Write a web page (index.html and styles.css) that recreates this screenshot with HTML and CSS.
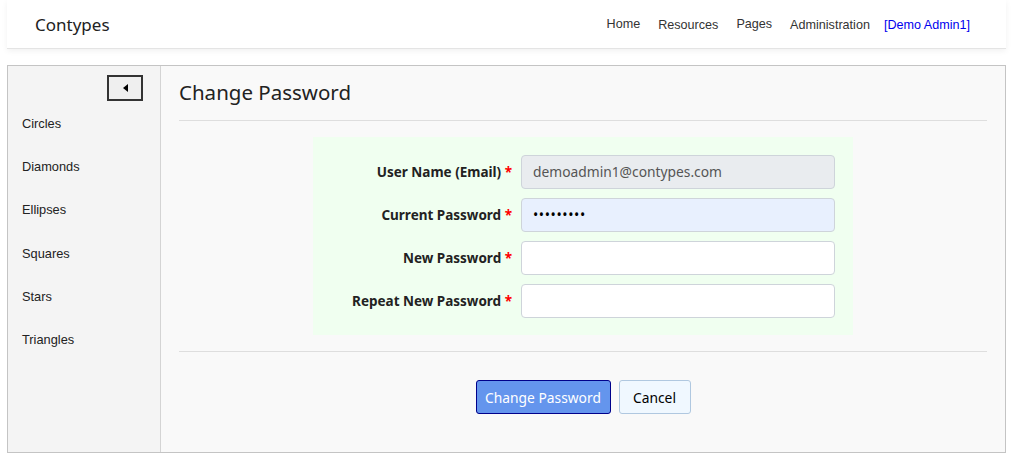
FILE: index.html
```html
<!DOCTYPE html>
<html>
<head>
<meta charset="utf-8">
<link rel="stylesheet" href="styles.css">
</head>
<body>
<header class="topbar">
  <div class="brand">Contypes</div>
  <nav class="nav">
    <a class="nav-link up">Home</a>
    <a class="nav-link">Resources</a>
    <a class="nav-link up">Pages</a>
    <a class="nav-link">Administration</a>
    <a class="nav-link user">[Demo Admin1]</a>
  </nav>
</header>
<main class="panel">
  <aside class="sidebar">
    <div class="toggle-row">
      <button class="toggle"><svg width="5" height="8" viewBox="0 0 5 8"><polygon points="5,0 5,8 0,4" fill="#000"/></svg></button>
    </div>
    <ul class="side-list">
      <li>Circles</li>
      <li>Diamonds</li>
      <li>Ellipses</li>
      <li>Squares</li>
      <li>Stars</li>
      <li>Triangles</li>
    </ul>
  </aside>
  <section class="content">
    <h1 class="title">Change Password</h1>
    <div class="rule"></div>
    <div class="form-wrap">
      <form class="form">
        <label class="lbl">User Name (Email) <span class="req">*</span></label>
        <div class="field disabled">demoadmin1@contypes.com</div>
        <label class="lbl">Current Password <span class="req">*</span></label>
        <div class="field autofill">•••••••••</div>
        <label class="lbl">New Password <span class="req">*</span></label>
        <div class="field"></div>
        <label class="lbl">Repeat New Password <span class="req">*</span></label>
        <div class="field"></div>
      </form>
    </div>
    <div class="rule rule2"></div>
    <div class="actions">
      <button class="btn primary">Change Password</button>
      <button class="btn secondary">Cancel</button>
    </div>
  </section>
</main>
</body>
</html>
```
FILE: styles.css
```css
* { box-sizing: border-box; }
html, body { margin: 0; padding: 0; background: #fff; }
body { font-family: "Noto Sans", sans-serif; color: #212529; }

.topbar {
  margin: 0 9px 0 7px;
  height: 49px;
  background: #fff;
  border-bottom: 1px solid #e4e4e4;
  box-shadow: 0 2px 6px rgba(0,0,0,0.06);
  display: flex;
  align-items: center;
  justify-content: space-between;
  padding: 0 36px 0 28px;
}
.brand { font-size: 17px; color: #222; padding-top: 1px; }
.nav { display: flex; align-items: center; font-family: "Liberation Sans", Arial, sans-serif; font-size: 12.6px; padding-top: 1px; }
.nav-link { color: #333; padding: 0 9px; position: relative; top: 0; }
.nav-link.up { top: -1px; }
.nav-link.user { color: #0000ee; padding-right: 0; padding-left: 5px; }

.panel {
  margin: 16px 9px 0 7px;
  height: 388px;
  border: 1px solid #c4c4c4;
  display: flex;
  background: #f9f9f9;
}
.sidebar {
  width: 153px;
  flex: none;
  background: #f4f4f4;
  border-right: 1px solid #d4d4d4;
}
.toggle-row { display: flex; justify-content: flex-end; padding: 9px 17px 0 0; }
.toggle {
  width: 36px; height: 26px;
  border: 2px solid #333;
  background: #efefef;
  padding: 0;
  display: flex; align-items: center; justify-content: center;
}
.side-list {
  list-style: none; margin: 0; padding: 0 0 0 14px;
  font-family: "Liberation Sans", Arial, sans-serif;
  font-size: 12.8px; color: #222;
}
.side-list li { height: 43.2px; line-height: 43px; }
.side-list li:first-child { margin-top: 1px; }

.content { flex: 1; padding: 0 18px; }
.title {
  margin: 0; padding-top: 13px;
  font-weight: 400; font-size: 20.5px; line-height: 26px; color: #222;
  height: 54px;
}
.rule { height: 1px; background: #dedede; margin-top: 0; }
.form-wrap { display: flex; justify-content: center; padding-top: 16px; }
.form {
  width: 540px;
  background: #f0fff0;
  padding: 18px 18px 17px 17px;
  display: grid;
  grid-template-columns: 1fr 314px;
  column-gap: 9px;
  row-gap: 9px;
  align-items: center;
}
.lbl { text-align: right; font-weight: 700; font-size: 13.5px; color: #222; }
.req { color: #f00; }
.field {
  height: 34px;
  border: 1px solid #ced4da;
  border-radius: 4px;
  background: #fff;
  padding: 0 11px;
  font-size: 13.8px;
  line-height: 32px;
  color: #555;
}
.field.disabled { background: #e9ecef; }
.field.autofill { background: #e8f0fe; color: #000; letter-spacing: 0.6px; font-size: 14px; }
.rule2 { margin-top: 16px; }
.actions { display: flex; justify-content: center; gap: 8px; padding-top: 28px; }
.btn {
  height: 34px;
  font-family: "Noto Sans", sans-serif;
  font-size: 13.8px;
  border-radius: 3px;
  padding: 0;
  white-space: nowrap;
}
.primary { width: 135px; background: #6495ed; border: 1px solid #00008b; color: #fff; }
.secondary { width: 72px; background: #f0f8ff; border: 1px solid #b0c8e0; color: #000; }
```
